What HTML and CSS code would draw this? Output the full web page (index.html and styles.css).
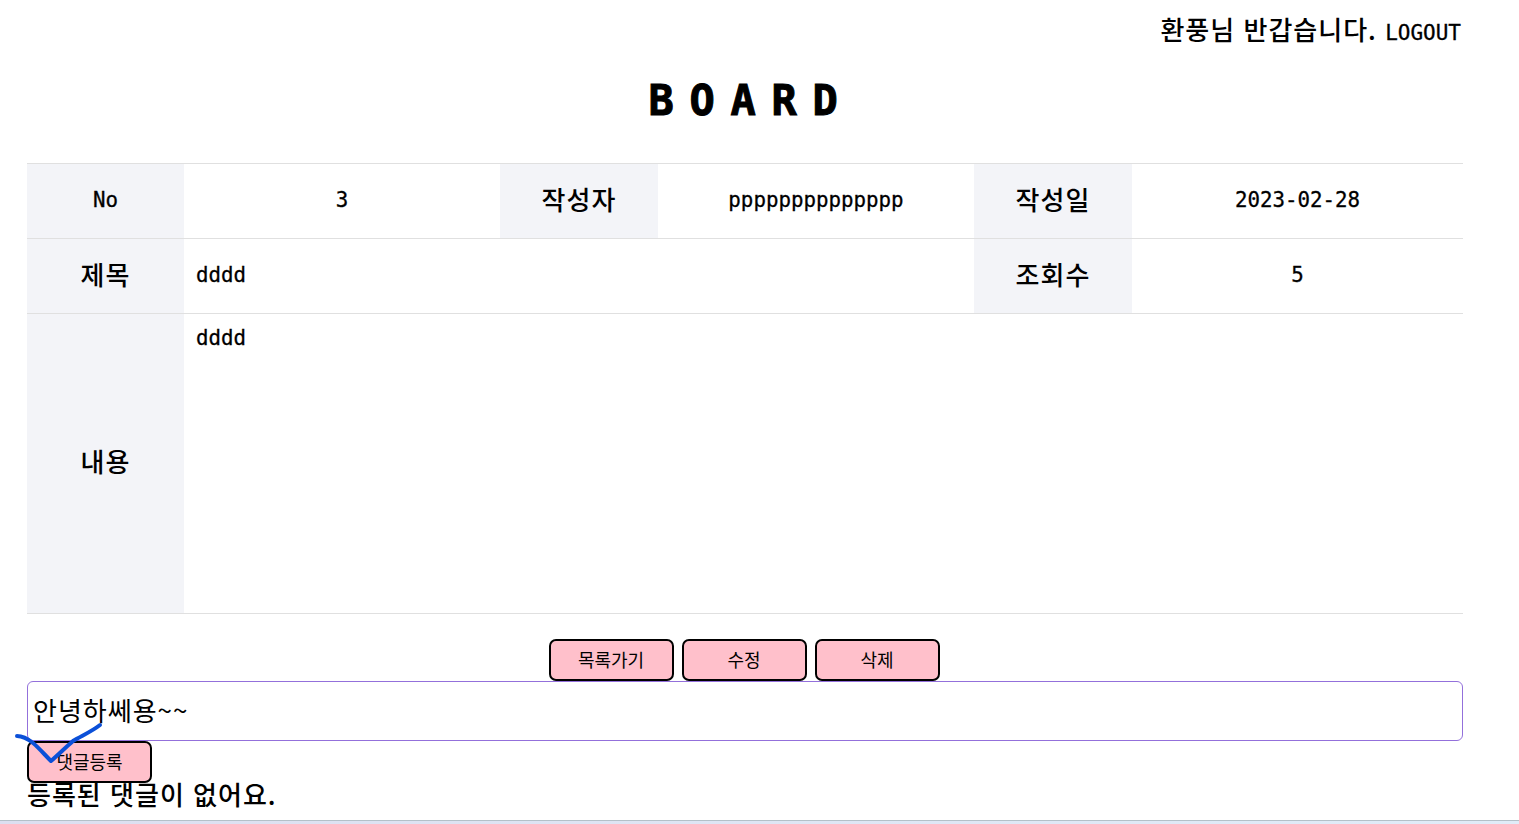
FILE: index.html
```html
<!DOCTYPE html>
<html lang="ko">

<head>
  <meta charset="UTF-8">
  <title>BOARD</title>
  <link rel="stylesheet" href="styles.css">
</head>

<body>
  <div class="wrap">
    <div class="login_info">환풍님 반갑습니다. <a href="#">LOGOUT</a></div>
    <h1 class="title">BOARD</h1>

    <table class="board">
      <colgroup>
        <col class="col_first">
        <col class="col_value">
        <col class="col_head">
        <col class="col_value">
        <col class="col_head">
        <col>
      </colgroup>
      <tr>
        <th class="latin">No</th>
        <td class="center">3</td>
        <th>작성자</th>
        <td class="center">pppppppppppppp</td>
        <th>작성일</th>
        <td class="center">2023-02-28</td>
      </tr>
      <tr>
        <th>제목</th>
        <td colspan="3">dddd</td>
        <th>조회수</th>
        <td class="center">5</td>
      </tr>
      <tr class="content_row">
        <th>내용</th>
        <td colspan="5">dddd</td>
      </tr>
    </table>

    <div class="button_area">
      <button>목록가기</button>
      <button>수정</button>
      <button>삭제</button>
    </div>

    <textarea class="reply_input">안녕하쎄용~~</textarea>
    <button class="reply_btn">댓글등록</button>
    <div class="no_reply">등록된 댓글이 없어요.</div>
  </div>

  <svg class="check_mark" width="100" height="50" viewBox="0 0 100 50">
    <path d="M2 14 C8 14 13 17 18 21 C24 26 29 32 36 39 C43 33 50 26 58 19 C66 14 76 10 85 3" />
  </svg>

  <div class="bottom_line"></div>
</body>

</html>
```

FILE: styles.css
```css
html,
body {
  height: 100%;
  overflow: hidden;
}

body {
  margin: 0;
  background-color: white;
  font-family: 'DejaVu Sans Mono', 'Noto Sans CJK KR', monospace;
  color: black;
}

.wrap {
  width: 1436px;
  margin-left: 27px;
}

.login_info {
  height: 63px;
  padding-top: 15px;
  box-sizing: border-box;
  padding-right: 2px;
  text-align: right;
  font-family: 'Noto Sans CJK KR', sans-serif;
  font-size: 26px;
  font-weight: 500;
  line-height: 28px;
  letter-spacing: 1px;
}

.login_info a {
  color: black;
  text-decoration: none;
  font-family: 'DejaVu Sans Mono', monospace;
  font-size: 21px;
  font-weight: normal;
  letter-spacing: 0;
  -webkit-text-stroke: 0.3px black;
}

.title {
  margin: 0;
  height: 100px;
  padding-top: 13px;
  padding-left: 12px;
  box-sizing: border-box;
  text-align: center;
  font-family: 'DejaVu Sans Mono', monospace;
  font-size: 42px;
  line-height: 50px;
  font-weight: bold;
  letter-spacing: 15.7px;
  -webkit-text-stroke: 1px black;
}

.board {
  width: 1436px;
  table-layout: fixed;
  border-collapse: collapse;
  font-size: 20.8px;
}

.col_first {
  width: 157px;
}

.col_head {
  width: 158px;
}

.col_value {
  width: 316px;
}

.board tr {
  height: 75px;
}

.board th,
.board td {
  border-top: 1px solid #e0e0e0;
  border-bottom: 1px solid #e0e0e0;
  padding: 0 12px 3px;
  font-weight: normal;
  -webkit-text-stroke: 0.3px black;
}

.board th {
  background-color: #f3f4f8;
  text-align: center;
  padding-bottom: 6px;
  font-size: 26px;
  font-weight: 500;
  letter-spacing: 1px;
  -webkit-text-stroke: 0;
}

.board th.latin {
  padding-bottom: 3px;
  font-size: 20.8px;
  letter-spacing: 0;
  -webkit-text-stroke: 0.3px black;
}

.board .center {
  text-align: center;
}

.board .content_row {
  height: 300px;
}

.content_row td {
  vertical-align: top;
  padding-top: 12px;
}

.button_area {
  display: flex;
  justify-content: center;
  gap: 8px;
  margin-top: 25px;
  padding-right: 2px;
}

button {
  display: block;
  width: 125px;
  height: 42px;
  padding: 0 0 3px;
  border: 2px solid black;
  border-radius: 7px;
  background-color: pink;
  font-family: 'Noto Sans CJK KR', sans-serif;
  font-size: 18px;
  color: black;
}

.reply_input {
  display: block;
  box-sizing: border-box;
  width: 1436px;
  height: 60px;
  padding: 10px 5px;
  border: 1px solid mediumpurple;
  border-radius: 6px;
  outline: none;
  resize: none;
  overflow: hidden;
  font-family: 'Noto Sans CJK KR', sans-serif;
  font-size: 26px;
  line-height: 36px;
  letter-spacing: 1px;
}

.no_reply {
  font-family: 'Noto Sans CJK KR', sans-serif;
  font-size: 26px;
  font-weight: 500;
  line-height: 22px;
  letter-spacing: 1px;
}

.check_mark {
  position: absolute;
  left: 15px;
  top: 722px;
}

.check_mark path {
  fill: none;
  stroke: #0b50d8;
  stroke-width: 4;
  stroke-linecap: round;
  stroke-linejoin: round;
}

.bottom_line {
  position: absolute;
  left: 0;
  right: 0;
  bottom: 0;
  height: 3px;
  border-top: 1px solid #b4c0c8;
  background: linear-gradient(to right, #dcdff0, #e0ecf8);
}
```
